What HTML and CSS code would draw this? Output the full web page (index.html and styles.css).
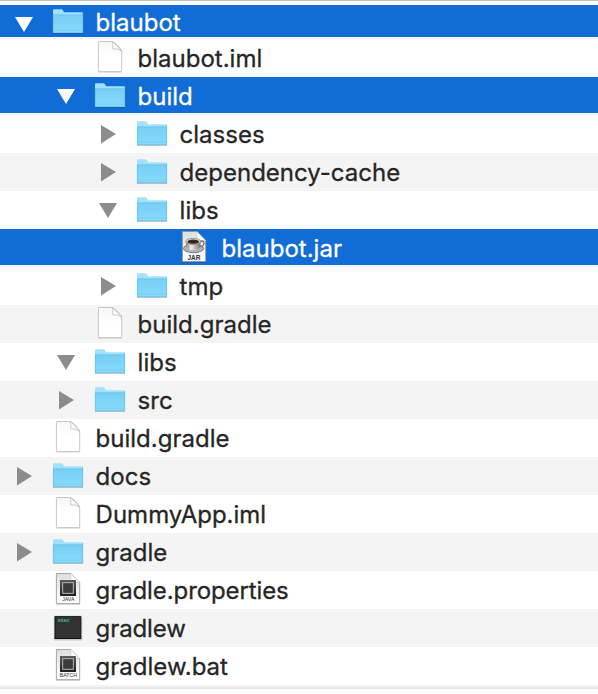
FILE: index.html
```
<!DOCTYPE html>
<html lang="en">
<head>
<meta charset="utf-8">
<title>Files</title>
<link rel="stylesheet" href="styles.css">
</head>
<body>
<svg class="defs" width="0" height="0" aria-hidden="true">
  <defs>
    <linearGradient id="fold" x1="0" y1="0" x2="0" y2="1"><stop offset="0" stop-color="#76cff5"/><stop offset="1" stop-color="#88dafb"/></linearGradient>
    <linearGradient id="paper" x1="0" y1="0" x2="0" y2="1"><stop offset="0" stop-color="#f7f7f7"/><stop offset=".5" stop-color="#fff"/></linearGradient>
    <linearGradient id="metal" x1="0" y1="0" x2="0" y2="1"><stop offset="0" stop-color="#dedede"/><stop offset="1" stop-color="#fff"/></linearGradient>
    <linearGradient id="chip" x1="0" y1="0" x2="0" y2="1"><stop offset="0" stop-color="#5c5c5c"/><stop offset="1" stop-color="#202020"/></linearGradient>
    <linearGradient id="cup" x1="0" y1="0" x2="1" y2="0"><stop offset="0" stop-color="#777"/><stop offset=".35" stop-color="#eee"/><stop offset="1" stop-color="#777"/></linearGradient>
  </defs>
  <symbol id="down" viewBox="0 0 20 38"><path d="M1 12H19L10 27Z"/></symbol>
  <symbol id="right" viewBox="0 0 20 38"><path d="M3 10V28.5L18 19Z"/></symbol>
  <symbol id="folder" viewBox="0 0 32 38">
    <path d="M1 30.5H31" stroke="#000" stroke-opacity=".22" stroke-width="1"/>
    <path d="M1 29V7.2Q1 6.2 2 6.2H9.2Q10.3 6.2 10.9 7.2L12 9.2H30Q31 9.2 31 10.2V29Q31 30 30 30H2Q1 30 1 29Z" fill="#a1e1fc"/>
    <path d="M1 12H31V29Q31 30 30 30H2Q1 30 1 29Z" fill="url(#fold)"/>
    <path d="M1 11.8H31" stroke="#5fbde6" stroke-width=".7"/>
    <path d="M1.4 27.2H30.6" stroke="#71c6ea" stroke-width=".5"/>
    <path d="M1.3 12V29.7H30.7V10" fill="none" stroke="#62b8dc" stroke-width=".6"/>
  </symbol>
  <symbol id="doc" viewBox="0 0 32 38">
    <path d="M4 33.1H28" stroke="#000" stroke-opacity=".15"/>
    <path d="M4.4 3.2Q4.4 2.5 5.2 2.5H17.5Q20 2.6 22.3 5.3L26 9.2Q27.7 11 27.7 13.2V32Q27.7 32.6 27 32.6H5.2Q4.4 32.6 4.4 32Z" fill="url(#paper)" stroke="#b9b9b9" stroke-width=".8"/>
    <path d="M18 2.7Q19.5 5 18.7 9.8Q24.5 9.4 27.5 12Q25.5 9.8 22.2 6.2Q19.5 3 18 2.7Z" fill="#fff" stroke="#b5b5b5" stroke-width=".7"/>
  </symbol>
  <symbol id="sheet" viewBox="0 0 32 38">
    <path d="M4 33.3H28" stroke="#000" stroke-opacity=".2"/>
    <path d="M4.4 2.5H18.8L27.7 11.5V32.6H4.4Z" fill="url(#metal)" stroke="#929292" stroke-width=".8"/>
    <path d="M18.8 2.5V11.5H27.7Z" fill="#fff" stroke="#c2c2c2" stroke-width=".6"/>
  </symbol>
  <symbol id="script" viewBox="0 0 32 38">
    <use href="#sheet" width="32" height="38"/>
    <rect x="8" y="9" width="16" height="16" fill="url(#chip)"/>
    <rect x="10.7" y="11.7" width="10.6" height="10.6" fill="#3b3b3b" stroke="#c4c4c4" stroke-width=".9"/>
  </symbol>
  <symbol id="jar" viewBox="0 0 32 38">
    <use href="#sheet" width="32" height="38"/>
    <ellipse cx="15.5" cy="19.5" rx="10.1" ry="4.2" fill="#b2b2b2" stroke="#666" stroke-width=".8"/>
    <path d="M20 13Q26.5 10.8 26 14.5Q25.5 18 20 18" fill="none" stroke="#777" stroke-width="1.4"/>
    <path d="M7.7 13Q8 21.5 15.2 21.5Q22.4 21.5 22.7 13Z" fill="url(#cup)"/>
    <ellipse cx="15.2" cy="12.4" rx="7.5" ry="3.1" fill="#ddd" stroke="#777" stroke-width=".7"/>
    <ellipse cx="15.2" cy="12.7" rx="5.9" ry="2.1" fill="#38281c"/>
  </symbol>
  <symbol id="exec" viewBox="0 0 32 38">
    <rect x="1.8" y="8.5" width="28.5" height="23" fill="#000" opacity=".18"/>
    <rect x="3" y="7.5" width="25.8" height="22" fill="#323232" stroke="#111" stroke-width="1"/>
    <path d="M2.2 6.7H29.8" stroke="#b9dfe4" stroke-width=".6"/>
  </symbol>
</svg>
<main class="list">
  <div class="row selected first"><svg class="arrow"><use href="#down"/></svg><svg class="icon"><use href="#folder"/></svg><span class="name">blaubot</span></div>
  <div class="row d1"><i class="arrow"></i><svg class="icon"><use href="#doc"/></svg><span class="name">blaubot.iml</span></div>
  <div class="row d1 selected"><svg class="arrow"><use href="#down"/></svg><svg class="icon"><use href="#folder"/></svg><span class="name">build</span></div>
  <div class="row d2"><svg class="arrow"><use href="#right"/></svg><svg class="icon"><use href="#folder"/></svg><span class="name">classes</span></div>
  <div class="row d2 alt"><svg class="arrow"><use href="#right"/></svg><svg class="icon"><use href="#folder"/></svg><span class="name">dependency-cache</span></div>
  <div class="row d2"><svg class="arrow"><use href="#down"/></svg><svg class="icon"><use href="#folder"/></svg><span class="name">libs</span></div>
  <div class="row d3 selected"><i class="arrow"></i><svg class="icon"><use href="#jar"/><text class="tag tag-jar" x="16" y="30.6">JAR</text></svg><span class="name">blaubot.jar</span></div>
  <div class="row d2"><svg class="arrow"><use href="#right"/></svg><svg class="icon"><use href="#folder"/></svg><span class="name">tmp</span></div>
  <div class="row d1 alt"><i class="arrow"></i><svg class="icon"><use href="#doc"/></svg><span class="name">build.gradle</span></div>
  <div class="row d1"><svg class="arrow"><use href="#down"/></svg><svg class="icon"><use href="#folder"/></svg><span class="name">libs</span></div>
  <div class="row d1 alt"><svg class="arrow"><use href="#right"/></svg><svg class="icon"><use href="#folder"/></svg><span class="name">src</span></div>
  <div class="row"><i class="arrow"></i><svg class="icon"><use href="#doc"/></svg><span class="name">build.gradle</span></div>
  <div class="row alt"><svg class="arrow"><use href="#right"/></svg><svg class="icon"><use href="#folder"/></svg><span class="name">docs</span></div>
  <div class="row"><i class="arrow"></i><svg class="icon"><use href="#doc"/></svg><span class="name">DummyApp.iml</span></div>
  <div class="row alt"><svg class="arrow"><use href="#right"/></svg><svg class="icon"><use href="#folder"/></svg><span class="name">gradle</span></div>
  <div class="row"><i class="arrow"></i><svg class="icon"><use href="#script"/><text class="tag" x="16.3" y="30.2">JAVA</text></svg><span class="name tight">gradle.properties</span></div>
  <div class="row alt"><i class="arrow"></i><svg class="icon"><use href="#exec"/><text class="tag tag-exec" x="5.8" y="13">exec</text></svg><span class="name tight">gradlew</span></div>
  <div class="row"><i class="arrow"></i><svg class="icon"><use href="#script"/><text class="tag" x="16.3" y="30.2">BATCH</text></svg><span class="name">gradlew.bat</span></div>
</main>
<footer class="bar"></footer>
</body>
</html>
```
FILE: styles.css
```
* { box-sizing: border-box; }
body {
  margin: 0;
  height: 694px;
  overflow: hidden;
  background: #fff;
  font-family: Inter, "Liberation Sans", sans-serif;
  color: #262626;
}
.defs { display: block; height: 0; }
.list { border-top: 1px solid #bfbfbf; padding-top: 2px; }
.row {
  display: flex;
  height: 38px;
  padding-left: 14px;
}
.row.d1 { padding-left: 56px; }
.row.d2 { padding-left: 98px; }
.row.d3 { padding-left: 140px; }
.alt { background: #f4f4f4; }
.selected {
  background: linear-gradient(#116cd6 36px, #f4f4f4 36px);
  color: #fff;
}
.selected.first {
  height: 36px;
  background: linear-gradient(#fff 2px, #116cd6 2px, #116cd6 34px, #f4f4f4 34px);
}
.arrow { flex: none; width: 20px; height: 38px; fill: #8c8c8c; }
.selected .arrow { fill: #fff; }
.first .arrow { margin-top: 2px; }
.icon { flex: none; width: 32px; height: 38px; margin-left: 18px; }
.name {
  margin-left: 11.6px;
  font-size: 24px;
  line-height: 40px;
  -webkit-text-stroke: 0.3px currentColor;
  white-space: nowrap;
}
.tight { letter-spacing: -0.1px; }
.tag {
  font-family: "Liberation Sans", sans-serif;
  font-size: 5.2px;
  text-anchor: middle;
  fill: #333;
}
.tag-jar { font-size: 6.5px; font-weight: 700; }
.tag-exec {
  font-family: "Liberation Mono", monospace;
  font-size: 5px;
  font-weight: 700;
  text-anchor: start;
  fill: #46c967;
}
.bar {
  height: 9px;
  border-top: 2px solid #f4f4f4;
  background: linear-gradient(#e5e5e5 2px, #fafafa 2px);
}
```
